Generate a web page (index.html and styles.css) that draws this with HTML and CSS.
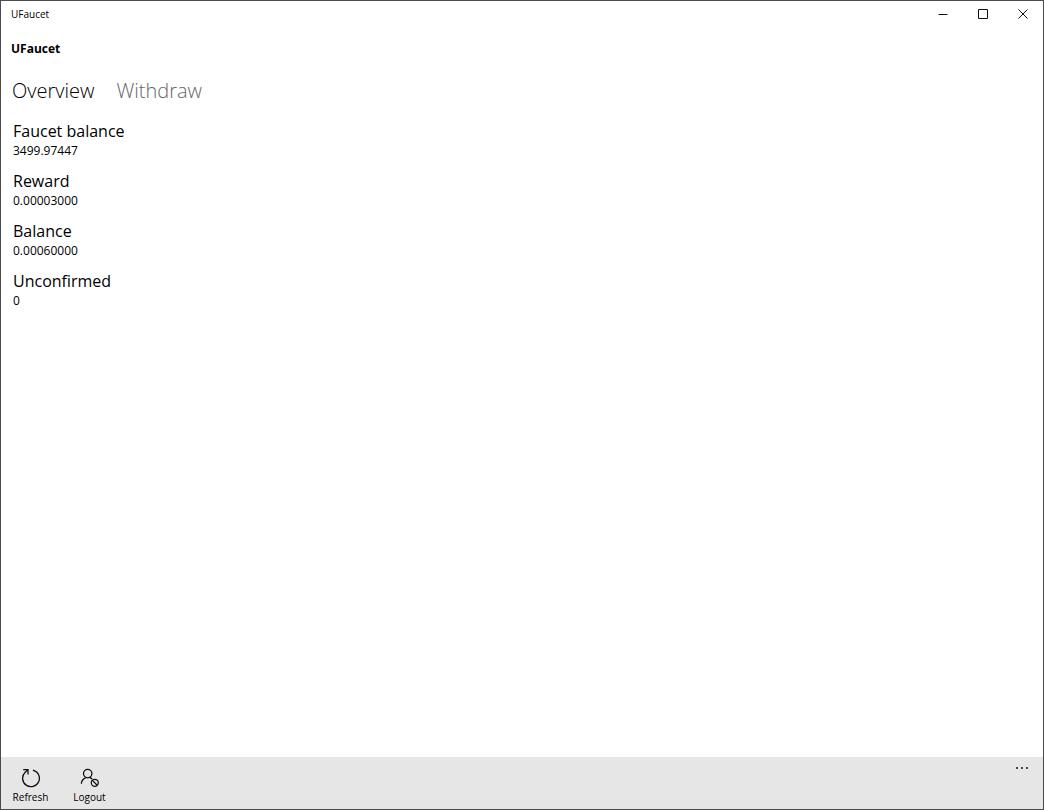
FILE: index.html
```html
<!DOCTYPE html>
<html lang="en">
<head>
  <meta charset="UTF-8" />
  <meta name="viewport" content="width=device-width, initial-scale=1" />
  <title>UFaucet</title>
  <link rel="stylesheet" href="styles.css">
</head>
<body>
  <div class="window">
    <header class="titlebar">
      <span class="titlebar-text">UFaucet</span>
      <div class="window-buttons">
        <button type="button" aria-label="Minimize">
          <svg viewBox="0 0 10 10"><path d="M0.5 5.5h9" /></svg>
        </button>
        <button type="button" aria-label="Maximize">
          <svg viewBox="0 0 10 10"><path d="M0.5 0.5h9v9h-9z" /></svg>
        </button>
        <button type="button" aria-label="Close">
          <svg viewBox="0 0 10 10"><path d="M0.5 0.5l9 9M9.5 0.5l-9 9" /></svg>
        </button>
      </div>
    </header>

    <h1>UFaucet</h1>

    <nav class="pivot">
      <button type="button" class="active">Overview</button>
      <button type="button">Withdraw</button>
    </nav>

    <main>
      <dl class="stats">
        <div class="stat">
          <dt>Faucet balance</dt>
          <dd>3499.97447</dd>
        </div>
        <div class="stat">
          <dt>Reward</dt>
          <dd>0.00003000</dd>
        </div>
        <div class="stat">
          <dt>Balance</dt>
          <dd>0.00060000</dd>
        </div>
        <div class="stat">
          <dt>Unconfirmed</dt>
          <dd>0</dd>
        </div>
      </dl>
    </main>

    <footer class="command-bar">
      <button type="button" class="command">
        <svg viewBox="0 0 20 20">
          <path d="M11.9 2.1A8.4 8.4 0 1 1 4.2 4.2L6.9 1.7" />
          <path d="M2.2 1.6h4.8v4.8" />
        </svg>
        Refresh
      </button>
      <button type="button" class="command">
        <svg viewBox="0 0 20 20">
          <circle cx="7.7" cy="5.6" r="4.2" />
          <path d="M1.3 15.8c0.3-3 1.9-5 4.4-6.1M9.9 9.4l2.2 1.5" />
          <circle cx="14.8" cy="14.8" r="3.5" />
          <path d="M12.4 12.4l4.8 4.8" />
        </svg>
        Logout
      </button>
      <button type="button" class="more" aria-label="More">
        <svg viewBox="0 0 14 4">
          <circle cx="2" cy="2" r="1" />
          <circle cx="7" cy="2" r="1" />
          <circle cx="12" cy="2" r="1" />
        </svg>
      </button>
    </footer>
  </div>
</body>
</html>
```
FILE: styles.css
```css
* {
  box-sizing: border-box;
}
body {
  margin: 0;
  font-family: 'Segoe UI', 'Open Sans', 'Noto Sans', sans-serif;
  font-size: 12px;
  color: #000;
  background: #fff;
}
button {
  padding: 0;
  border: 0;
  background: none;
  font-family: inherit;
  color: inherit;
}
svg {
  display: block;
  fill: none;
  stroke: #111;
}
.window {
  display: flex;
  flex-direction: column;
  min-height: 100vh;
  border: 1px solid #4c4a4d;
}

/* Title bar */
.titlebar {
  display: flex;
  justify-content: space-between;
  align-items: center;
  height: 26px;
  padding-left: 10px;
}
.titlebar-text {
  font-size: 10px;
}
.window-buttons {
  display: flex;
}
.window-buttons button {
  display: grid;
  place-items: center;
  width: 40px;
  height: 26px;
}
.window-buttons svg {
  width: 10px;
  height: 10px;
}

h1 {
  margin: 0;
  padding: 12px 10px 0;
  font-size: 12px;
  line-height: 20px;
  font-weight: 700;
}

/* Tabs */
.pivot {
  display: flex;
  gap: 22px;
  padding: 17px 11px 0;
}
.pivot button {
  font-size: 20px;
  line-height: 30px;
  font-weight: 300;
  color: #666;
}
.pivot .active {
  color: #000;
}

/* Balances */
main {
  flex: 1;
  padding: 14px 12px;
}
.stats {
  display: flex;
  flex-direction: column;
  gap: 10px;
  margin: 0;
}
.stat dt {
  font-size: 16px;
  line-height: 22px;
}
.stat dd {
  margin: 0;
  font-size: 12px;
  line-height: 18px;
}

/* Bottom bar */
.command-bar {
  display: flex;
  height: 52px;
  background: #e6e6e6;
}
.command {
  display: flex;
  flex-direction: column;
  align-items: center;
  gap: 1px;
  width: 59px;
  padding-top: 11px;
  font-size: 10px;
  line-height: 16px;
}
.command svg {
  width: 20px;
  height: 20px;
  stroke-width: 1.3;
}
.more {
  display: flex;
  justify-content: center;
  width: 42px;
  margin-left: auto;
  padding-top: 9px;
}
.more svg {
  width: 14px;
  height: 4px;
  fill: #111;
  stroke: none;
}
```
